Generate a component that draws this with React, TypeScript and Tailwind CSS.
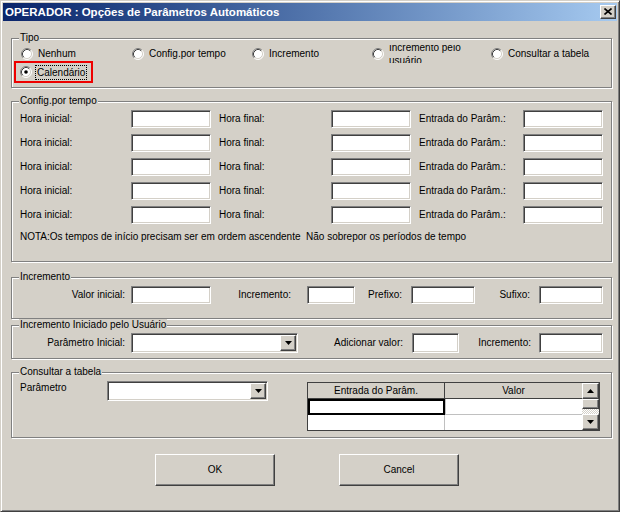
import React from "react";

const sunken =
  "bg-white border border-t-[#808080] border-l-[#808080] border-r-white border-b-white shadow-[inset_1px_1px_0_#404040,inset_-1px_-1px_0_#d4d0c8]";
const raised =
  "bg-[#d4d0c8] border border-t-white border-l-white border-r-[#404040] border-b-[#404040] shadow-[inset_-1px_-1px_0_#808080]";

function Radio({ checked }: { checked?: boolean }) {
  return (
    <svg width="12" height="12" viewBox="0 0 12 12" className="shrink-0">
      <circle cx="6" cy="6" r="5" fill="#fff" />
      <path d="M2.11 9.89A5.5 5.5 0 0 1 9.89 2.11" fill="none" stroke="#808080" />
      <path d="M9.89 2.11A5.5 5.5 0 0 1 2.11 9.89" fill="none" stroke="#fff" />
      <path d="M2.82 9.18A4.5 4.5 0 0 1 9.18 2.82" fill="none" stroke="#404040" />
      <path d="M9.18 2.82A4.5 4.5 0 0 1 2.82 9.18" fill="none" stroke="#d4d0c8" />
      {checked && <circle cx="6" cy="6" r="1.8" fill="#000" />}
    </svg>
  );
}

function RadioItem({ label, className }: { label: string; className: string }) {
  return (
    <div className={`flex items-center ${className}`}>
      <Radio />
      <span className="ml-[5px] whitespace-nowrap">{label}</span>
    </div>
  );
}

function Group({
  title,
  className,
  children,
}: {
  title: string;
  className: string;
  children: React.ReactNode;
}) {
  return (
    <div
      className={`relative border border-[#808080] shadow-[1px_1px_0_#fff,inset_1px_1px_0_#fff] ${className}`}
    >
      <span className="absolute left-[7px] -top-[7px] px-[1px] bg-[#d4d0c8] leading-[12px] whitespace-nowrap">
        {title}
      </span>
      {children}
    </div>
  );
}

function Arrow({ up }: { up?: boolean }) {
  return (
    <svg width="7" height="4" viewBox="0 0 7 4">
      <path d={up ? "M0 4h7L3.5 0z" : "M0 0h7L3.5 4z"} fill="#000" />
    </svg>
  );
}

function Combo({ className }: { className: string }) {
  return (
    <div className={`${sunken} flex justify-end p-[1px] shrink-0 ${className}`}>
      <div className={`${raised} w-[16px] flex items-center justify-center`}>
        <Arrow />
      </div>
    </div>
  );
}

function Edit({ className }: { className: string }) {
  return <div className={`${sunken} shrink-0 ${className}`} />;
}

function ConfigRow() {
  return (
    <div className="flex items-center h-[18px]">
      <span className="w-[111px]">Hora inicial:</span>
      <Edit className="w-[80px] h-[18px]" />
      <span className="ml-[8px] w-[112px]">Hora final:</span>
      <Edit className="w-[80px] h-[18px]" />
      <span className="ml-[8px] w-[104px]">Entrada do Parâm.:</span>
      <Edit className="w-[80px] h-[18px]" />
    </div>
  );
}

export default function App() {
  return (
    <div className="w-[620px] h-[512px] bg-[#d4d0c8] p-[2px] border border-t-[#d4d0c8] border-l-[#d4d0c8] border-r-[#404040] border-b-[#404040] shadow-[inset_1px_1px_0_#fff,inset_-1px_-1px_0_#808080] text-[10px] leading-[12px] text-black font-['Liberation_Sans',Arial,sans-serif] overflow-hidden">
      {/* barra de título */}
      <div className="h-[18px] flex items-center justify-between pl-[2px] pr-[1px] bg-linear-to-r from-[#0a246a] to-[#a6caf0]">
        <span className="text-white font-bold text-[11.5px] whitespace-nowrap">
          OPERADOR : Opções de Parâmetros Automáticos
        </span>
        <div className={`${raised} w-[16px] h-[14px] flex items-center justify-center`}>
          <svg width="8" height="7" viewBox="0 0 8 7" className="-mt-[1px] -ml-[1px]">
            <path d="M0.5 0.5L7.5 6.5M7.5 0.5L0.5 6.5" stroke="#000" strokeWidth="1.6" />
          </svg>
        </div>
      </div>

      <div className="pl-[8px] pr-[5px]">
        {/* Tipo */}
        <Group title="Tipo" className="mt-[17px] h-[50px]">
          <div className="flex items-center h-[18px] mt-[6px] pl-[9px]">
            <RadioItem label="Nenhum" className="w-[111px]" />
            <RadioItem label="Config.por tempo" className="w-[120px]" />
            <RadioItem label="Incremento" className="w-[120px]" />
            <div className="flex items-center w-[119px]">
              <Radio />
              <div className="ml-[5px] h-[18px] w-[95px] overflow-hidden flex items-center">
                <span className="leading-[13px]">Incremento pelo usuário</span>
              </div>
            </div>
            <RadioItem label="Consultar a tabela" className="" />
          </div>
          <div className="ml-[2px] -mt-[2px] w-fit h-[22px] border-2 border-[#ee0000] flex items-center pl-[4px] pr-[4px]">
            <Radio checked />
            <span className="ml-[3px] px-[1px] border border-dotted border-black leading-[13px]">
              Calendário
            </span>
          </div>
        </Group>

        {/* Config.por tempo */}
        <Group title="Config.por tempo" className="mt-[13px] h-[161px]">
          <div className="pt-[8px] pl-[8px] flex flex-col gap-[6px]">
            <ConfigRow />
            <ConfigRow />
            <ConfigRow />
            <ConfigRow />
            <ConfigRow />
          </div>
          <div className="pl-[8px] mt-[7px] whitespace-pre">
            NOTA:Os tempos de início precisam ser em ordem ascendente  Não sobrepor os períodos de tempo
          </div>
        </Group>

        {/* Incremento */}
        <Group title="Incremento" className="mt-[15px] h-[42px]">
          <div className="flex items-center h-[18px] mt-[8px]">
            <span className="w-[113px] text-right">Valor inicial:</span>
            <Edit className="ml-[6px] w-[80px] h-[18px]" />
            <span className="w-[80px] text-right">Incremento:</span>
            <Edit className="ml-[16px] w-[48px] h-[18px]" />
            <span className="w-[47px] text-right">Prefixo:</span>
            <Edit className="ml-[9px] w-[64px] h-[18px]" />
            <span className="w-[55px] text-right">Sufixo:</span>
            <Edit className="ml-[9px] w-[64px] h-[18px]" />
          </div>
        </Group>

        {/* Incremento Iniciado pelo Usuário */}
        <Group title="Incremento Iniciado pelo Usuário" className="mt-[6px] h-[34px]">
          <div className="flex items-center h-[20px] mt-[7px]">
            <span className="w-[113px] text-right">Parâmetro Inicial:</span>
            <Combo className="ml-[6px] w-[167px] h-[20px]" />
            <span className="w-[105px] text-right">Adicionar valor:</span>
            <Edit className="ml-[9px] w-[47px] h-[20px]" />
            <span className="w-[72px] text-right">Incremento:</span>
            <Edit className="ml-[8px] w-[64px] h-[20px]" />
          </div>
        </Group>

        {/* Consultar a tabela */}
        <Group title="Consultar a tabela" className="mt-[13px] h-[66px]">
          <div className="flex items-start pt-[8px] pl-[8px]">
            <span className="w-[87px] mt-[1px]">Parâmetro</span>
            <Combo className="w-[161px] h-[20px]" />
            <div className="ml-[39px] mt-[1px] w-[293px] h-[49px] border border-[#404040] bg-white flex">
              <div className="flex-1 flex flex-col">
                <div className="flex h-[16px] bg-[#d4d0c8] border-b border-[#404040]">
                  <div className="w-[137px] border-r border-[#404040] text-center leading-[15px]">
                    Entrada do Parâm.
                  </div>
                  <div className="flex-1 text-center leading-[15px]">Valor</div>
                </div>
                <div className="flex h-[16px]">
                  <div className="w-[137px] border-2 border-black" />
                  <div className="flex-1 border-b border-[#c0c0c0] border-l border-l-[#c0c0c0]" />
                </div>
                <div className="flex flex-1">
                  <div className="w-[137px] border-r border-[#c0c0c0]" />
                  <div className="flex-1" />
                </div>
              </div>
              <div className="w-[17px] flex flex-col">
                <div className={`${raised} h-[16px] flex items-center justify-center`}>
                  <Arrow up />
                </div>
                <div className={`${raised} h-[10px]`} />
                <div className="flex-1 bg-[repeating-conic-gradient(#fff_0_25%,#d4d0c8_0_50%)] bg-[length:2px_2px]" />
                <div className={`${raised} h-[16px] flex items-center justify-center`}>
                  <Arrow />
                </div>
              </div>
            </div>
          </div>
        </Group>

        {/* botões */}
        <div className="flex mt-[16px]">
          <div className={`${raised} ml-[144px] w-[120px] h-[32px] flex items-center justify-center`}>
            OK
          </div>
          <div className={`${raised} ml-[64px] w-[120px] h-[32px] flex items-center justify-center`}>
            Cancel
          </div>
        </div>
      </div>
    </div>
  );
}
